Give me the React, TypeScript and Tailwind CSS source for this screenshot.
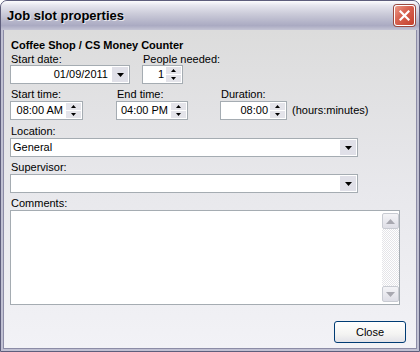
import React from "react";

function DownTri() {
  return (
    <svg width="7" height="4" viewBox="0 0 7 4" className="block">
      <polygon points="0,0 7,0 3.5,4" fill="#000" />
    </svg>
  );
}

function ComboBtn() {
  return (
    <div className="w-[16px] h-[15px] mr-[1px] bg-[#e0e0e8] flex items-center justify-center">
      <DownTri />
    </div>
  );
}

function Spin() {
  return (
    <div className="flex flex-col w-[15px] self-stretch py-[1px] mr-[1px] gap-[1px]">
      <div className="flex-1 bg-[#e4e4ea] flex items-center justify-center">
        <svg width="5" height="3" viewBox="0 0 5 3" className="block">
          <polygon points="2.5,0 5,3 0,3" fill="#000" />
        </svg>
      </div>
      <div className="flex-1 bg-[#e4e4ea] flex items-center justify-center">
        <svg width="5" height="3" viewBox="0 0 5 3" className="block">
          <polygon points="0,0 5,0 2.5,3" fill="#000" />
        </svg>
      </div>
    </div>
  );
}

function Label({ children }: { children: React.ReactNode }) {
  return <div className="h-[12px] leading-[12px] pl-[1px] whitespace-nowrap">{children}</div>;
}

function Box({ w, children, className = "" }: { w: string; children: React.ReactNode; className?: string }) {
  return (
    <div className={`${w} h-[19px] border border-[#a5acb2] bg-white flex items-center ${className}`}>
      {children}
    </div>
  );
}

function ScrollBtn({ up }: { up: boolean }) {
  return (
    <div className="h-[16px] border border-[#c8cbd2] rounded-[2px] bg-[linear-gradient(to_bottom,#f4f4f7,#dedee6)] flex items-center justify-center">
      <svg width="9" height="5" viewBox="0 0 9 5" className="block">
        {up ? (
          <polygon points="4.5,0 9,5 0,5" fill="#a8a8b0" />
        ) : (
          <polygon points="0,0 9,0 4.5,5" fill="#a8a8b0" />
        )}
      </svg>
    </div>
  );
}

export default function App() {
  return (
    <div className="w-[420px] h-[352px] font-['Liberation_Sans',Arial,sans-serif] text-[11px] text-black">
      <div className="w-full h-full flex flex-col rounded-t-[7px] border border-[#5e5e7c] bg-[#c0c0d2] overflow-hidden">
        {/* Title bar */}
        <div className="h-[29px] shrink-0 flex items-center bg-[linear-gradient(to_bottom,#fdfdfe_0%,#e6e6ee_15%,#cfcfdc_40%,#babacd_65%,#aaaac2_85%,#c4c4d4_100%)]">
          <div className="ml-[6px] text-[13px] font-bold leading-[16px] [text-shadow:1px_1px_0_#e8e8ee]">
            Job slot properties
          </div>
          <div className="ml-auto mr-[4px] w-[21px] h-[21px] rounded-[3px] border border-white bg-[linear-gradient(135deg,#ec9a88_0%,#d86452_40%,#c4402c_100%)] shadow-[0_0_0_1px_#9a4a40] flex items-center justify-center">
            <svg width="11" height="11" viewBox="0 0 11 11" className="block">
              <path d="M1.5 1.5 L9.5 9.5 M9.5 1.5 L1.5 9.5" stroke="#fff" strokeWidth="2.2" strokeLinecap="square" />
            </svg>
          </div>
        </div>
        {/* Frame + content */}
        <div className="flex-1 flex flex-col px-[2px] pb-[2px]">
          <div className="flex-1 flex flex-col border border-t-0 border-[#8c8ca6] bg-[linear-gradient(to_bottom,#dcdcdc_0%,#e8e8ec_50%,#f2f2f6_100%)] pl-[6px] pt-[9px]">
            <div className="font-bold leading-[13px] pl-[1px] h-[14px]">Coffee Shop / CS Money Counter</div>

            {/* Row 1 */}
            <div className="flex">
              <div className="flex flex-col w-[120px]">
                <Label>Start date:</Label>
                <Box w="w-[120px]">
                  <div className="flex-1 text-right pr-[4px]">01/09/2011</div>
                  <ComboBtn />
                </Box>
              </div>
              <div className="flex flex-col ml-[12px]">
                <Label>People needed:</Label>
                <Box w="w-[41px]">
                  <div className="flex-1 text-right pr-[2px]">1</div>
                  <Spin />
                </Box>
              </div>
            </div>

            {/* Row 2 */}
            <div className="flex mt-[4px]">
              <div className="flex flex-col">
                <Label>Start time:</Label>
                <Box w="w-[73px]" className="mt-[1px]">
                  <div className="flex-1 text-right pr-[3px]">08:00 AM</div>
                  <Spin />
                </Box>
              </div>
              <div className="flex flex-col ml-[33px]">
                <Label>End time:</Label>
                <Box w="w-[72px]" className="mt-[1px]">
                  <div className="flex-1 text-right pr-[3px]">04:00 PM</div>
                  <Spin />
                </Box>
              </div>
              <div className="flex flex-col ml-[32px]">
                <Label>Duration:</Label>
                <div className="flex items-center mt-[1px]">
                  <Box w="w-[67px]">
                    <div className="flex-1 text-right pr-[2px]">08:00</div>
                    <Spin />
                  </Box>
                  <div className="ml-[5px] whitespace-nowrap">(hours:minutes)</div>
                </div>
              </div>
            </div>

            {/* Location */}
            <div className="flex flex-col mt-[5px]">
              <Label>Location:</Label>
              <Box w="w-[348px]" className="mt-[1px]">
                <div className="flex-1 pl-[2px]">General</div>
                <ComboBtn />
              </Box>
            </div>

            {/* Supervisor */}
            <div className="flex flex-col mt-[4px]">
              <Label>Supervisor:</Label>
              <Box w="w-[348px]" className="mt-[1px]">
                <div className="flex-1" />
                <ComboBtn />
              </Box>
            </div>

            {/* Comments */}
            <div className="flex flex-col mt-[4px]">
              <Label>Comments:</Label>
              <div className="w-[390px] h-[95px] mt-[1px] border border-[#a5acb2] bg-white flex">
                <div className="flex-1" />
                <div className="w-[17px] flex flex-col py-[2px]">
                  <ScrollBtn up />
                  <div className="flex-1 bg-[repeating-conic-gradient(#e4e4e8_0_25%,#ffffff_0_50%)] bg-[length:2px_2px]" />
                  <ScrollBtn up={false} />
                </div>
              </div>
            </div>

            {/* Buttons */}
            <div className="flex justify-end pr-[10px] mt-[16px]">
              <div className="w-[72px] h-[22px] rounded-[3px] border border-[#003c74] bg-[linear-gradient(to_bottom,#ffffff_0%,#f4f4f2_60%,#e2e2e8_100%)] flex items-center justify-center">
                Close
              </div>
            </div>
          </div>
        </div>
      </div>
    </div>
  );
}
